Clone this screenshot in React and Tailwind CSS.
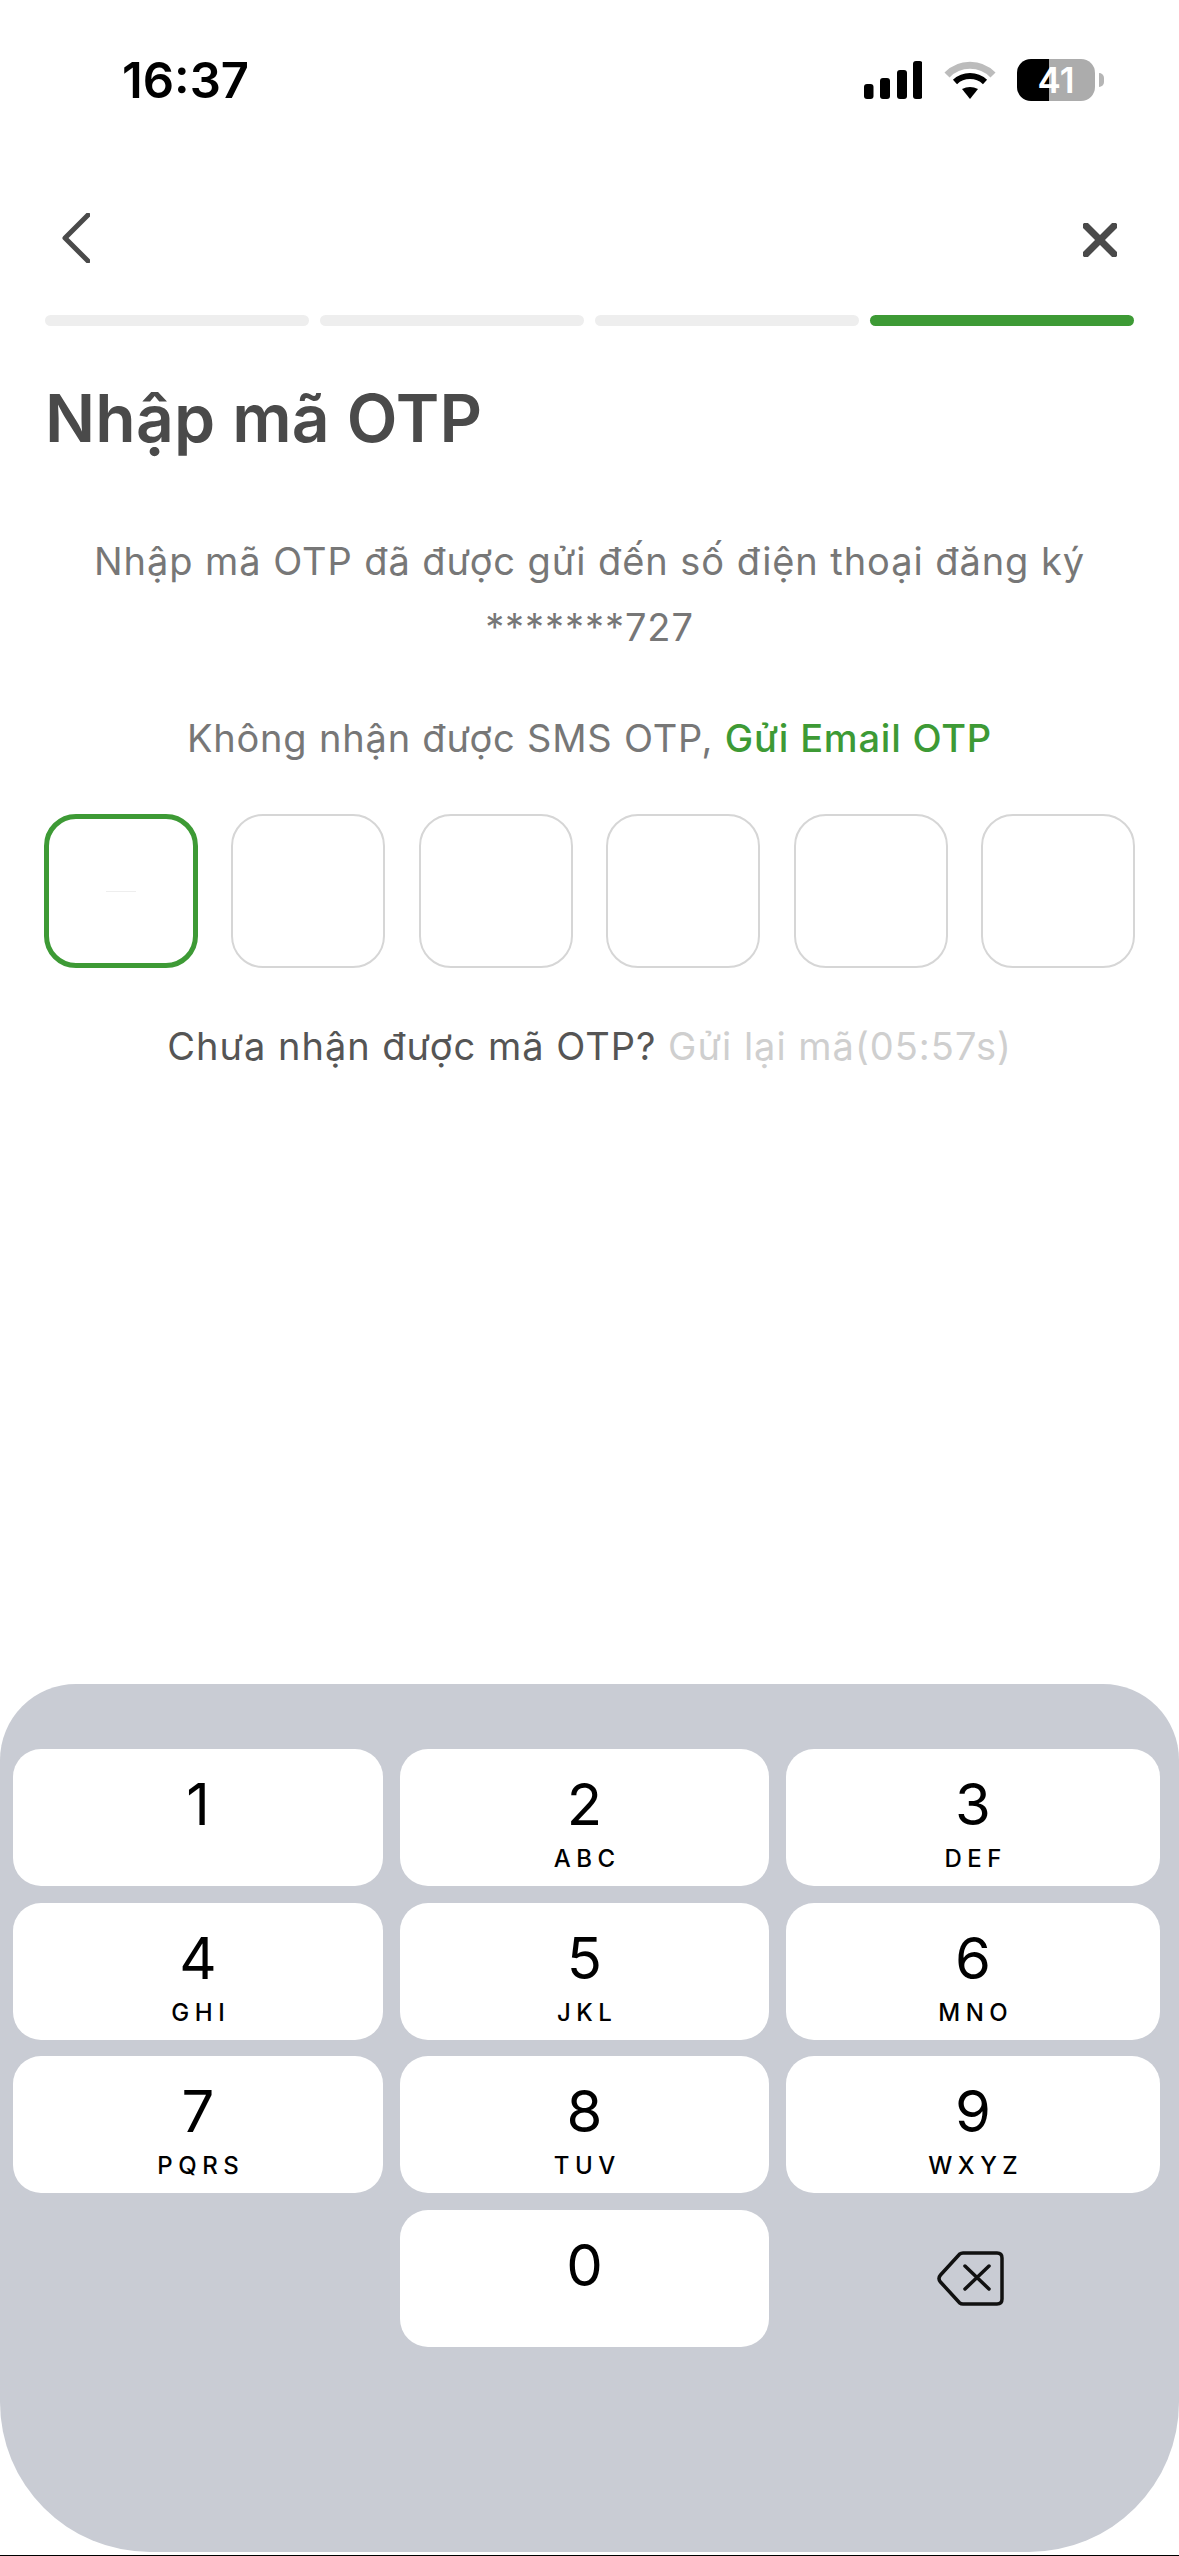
const keys = [
  ["1", ""],
  ["2", "ABC"],
  ["3", "DEF"],
  ["4", "GHI"],
  ["5", "JKL"],
  ["6", "MNO"],
  ["7", "PQRS"],
  ["8", "TUV"],
  ["9", "WXYZ"],
];

const Key = ({ digit, letters }) => (
  <div className="h-[137px] bg-white rounded-[28px] flex flex-col items-center pt-[26px] text-black">
    <span className="text-[58px] leading-[58px] font-normal">{digit}</span>
    {letters && (
      <span className="mt-[13px] text-[24px] leading-[25px] font-medium tracking-[5.5px] pl-[5.5px]">
        {letters}
      </span>
    )}
  </div>
);

const StatusIcons = () => (
  <div className="flex items-center">
    {/* signal */}
    <svg width="58" height="38" viewBox="0 0 58 38" fill="#000">
      <rect x="0" y="23" width="9.5" height="15" rx="3" />
      <rect x="16" y="17" width="10" height="21" rx="3" />
      <rect x="33" y="9" width="10" height="29" rx="3" />
      <rect x="49" y="0" width="9.5" height="38" rx="3" />
    </svg>
    {/* wifi */}
    <svg className="ml-[22px]" width="52" height="38" viewBox="0 0 52 38" fill="none">
      <path d="M3 14A32 32 0 0 1 49 14" stroke="#bcbcbc" strokeWidth="7" />
      <path d="M11 21A22 22 0 0 1 41 21" stroke="#000" strokeWidth="6" />
      <path d="M18 28Q26 24 34 28L26 38Z" fill="#000" />
    </svg>
    {/* battery */}
    <div className="ml-[21px] w-[78px] h-[42px] rounded-[14px] bg-[linear-gradient(to_right,#000_41%,#acacac_41%)] flex items-center justify-center text-white text-[35px] leading-none font-semibold">
      41
    </div>
    <div className="ml-[4px] w-[5px] h-[14px] rounded-r-full bg-[#b5b5b5]" />
  </div>
);

const App = () => {
  return (
    <div className="w-[1179px] h-[2556px] bg-white flex flex-col overflow-hidden font-['Inter',sans-serif]">
      {/* Status bar */}
      <div className="h-[160px] shrink-0 flex items-center justify-between pl-[122px] pr-[75px]">
        <span className="text-[49px] leading-none font-semibold text-black">16:37</span>
        <StatusIcons />
      </div>

      {/* Nav */}
      <div className="h-[155px] shrink-0 flex items-start justify-between px-[62px] pt-[53px]">
        <svg width="28" height="50" viewBox="0 0 28 50" fill="none" stroke="#4a4a4a" strokeWidth="5" strokeLinecap="round" strokeLinejoin="round">
          <path d="M26 2L3 25L26 48" />
        </svg>
        <svg className="mt-[10px]" width="34" height="34" viewBox="0 0 34 34" fill="none" stroke="#4a4a4a" strokeWidth="7" strokeLinecap="round">
          <path d="M3 3L31 31M31 3L3 31" />
        </svg>
      </div>

      {/* Steps */}
      <div className="shrink-0 flex gap-[11.5px] px-[45px]">
        <div className="flex-1 h-[11px] rounded-full bg-[#eeeeee]" />
        <div className="flex-1 h-[11px] rounded-full bg-[#eeeeee]" />
        <div className="flex-1 h-[11px] rounded-full bg-[#eeeeee]" />
        <div className="flex-1 h-[11px] rounded-full bg-[#3d9a35]" />
      </div>

      <h1 className="mt-[52px] px-[45px] text-[66px] leading-[80px] tracking-[0.2px] font-semibold text-[#4a4a4a]">
        Nhập mã OTP
      </h1>

      <p className="mt-[70px] px-[45px] text-center text-[38px] leading-[66px] tracking-[0.93px] text-[#777777]">
        Nhập mã OTP đã được gửi đến số điện thoại đăng ký
        <br />
        *******727
      </p>

      <p className="mt-[48px] text-center text-[38px] leading-[61px] tracking-[0.8px] text-[#777777]">
        Không nhận được SMS OTP, <span className="font-medium text-[#3d9a35]">Gửi Email OTP</span>
      </p>

      {/* OTP boxes */}
      <div className="mt-[45px] px-[44px] flex justify-between">
        <div className="w-[154px] h-[154px] rounded-[32px] border-[5px] border-[#3d9a35] flex items-center justify-center">
          <div className="w-[30px] h-[1px] bg-[#eeeeee]" />
        </div>
        {[1, 2, 3, 4, 5].map((i) => (
          <div key={i} className="w-[154px] h-[154px] rounded-[32px] border-[2.5px] border-[#d6d6d6]" />
        ))}
      </div>

      <p className="mt-[48px] text-center text-[38px] leading-[61px] tracking-[1px] text-[#555555]">
        Chưa nhận được mã OTP? <span className="text-[#cfcfcf]">Gửi lại mã(05:57s)</span>
      </p>

      {/* Keypad */}
      <div className="mt-auto h-[868px] shrink-0 bg-[#c9ccd4] rounded-t-[76px] rounded-b-[150px] pl-[13px] pt-[65px]">
        <div className="grid grid-cols-[370px_369px_374px] gap-x-[17px] gap-y-[16.5px]">
          {keys.map(([digit, letters]) => (
            <Key key={digit} digit={digit} letters={letters} />
          ))}
          <div />
          <Key digit="0" />
          <div className="flex items-center justify-center pr-[5px]">
            <svg width="67" height="55" viewBox="0 0 67 55" fill="none" stroke="#111" strokeLinecap="round" strokeLinejoin="round">
              <path d="M26 2H60Q65 2 65 7V48Q65 53 60 53H26Q24 53 22.500 51.800L3.500 31Q0.500 27.500 3.500 24L22.500 3.200Q24 2 26 2Z" strokeWidth="3.500" />
              <path d="M28 15L52 38M52 15L28 38" strokeWidth="3.500" />
            </svg>
          </div>
        </div>
      </div>
      <div className="mt-[3px] h-[1px] shrink-0 bg-black" />
    </div>
  );
};

export default App;
